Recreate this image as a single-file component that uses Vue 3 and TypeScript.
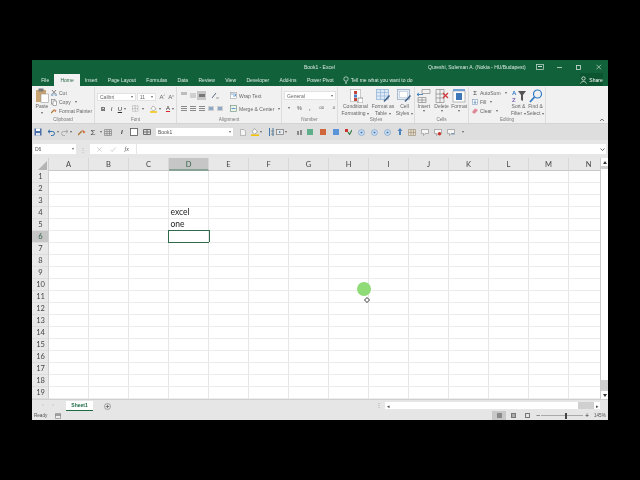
<script setup lang="ts">
const tabs = ['File', 'Home', 'Insert', 'Page Layout', 'Formulas', 'Data', 'Review', 'View', 'Developer', 'Add-ins', 'Power Pivot']
const columns = ['A', 'B', 'C', 'D', 'E', 'F', 'G', 'H', 'I', 'J', 'K', 'L', 'M', 'N']
const rows = Array.from({ length: 19 }, (_, index) => index + 1)

const qatSquares = ['#5fae8c', '#d0673a', '#5b93d8']
const qatRounds = [1, 2, 3]
</script>

<template>
  <div class="page">
    <div class="window">
      <header class="title-bar">
        <span class="doc-title">Book1 - Excel</span>
        <span class="user">Qureshi, Suleman A. (Nokia - HU/Budapest)</span>
        <div class="win-controls">
          <svg width="8" height="6" viewBox="0 0 8 6"><rect x="0.5" y="0.5" width="7" height="5" fill="none" stroke="#cfe0d6" stroke-width=".7" /><rect x="2" y="2" width="4" height="1" fill="#cfe0d6" /></svg>
          <svg width="8" height="6" viewBox="0 0 8 6"><rect x="1" y="3" width="5" height=".8" fill="#cfe0d6" /></svg>
          <svg width="8" height="6" viewBox="0 0 8 6"><rect x="1.500" y="1.500" width="4" height="4" fill="none" stroke="#cfe0d6" stroke-width=".8" /></svg>
          <svg width="8" height="6" viewBox="0 0 8 6"><path d="M1.500 .8l4.500 4.500M6 .8L1.500 5.300" stroke="#cfe0d6" stroke-width=".7" /></svg>
        </div>
      </header>

      <nav class="tab-bar">
        <span v-for="tab in tabs" :key="tab" class="tab" :class="{ 'tab--active': tab === 'Home' }">{{ tab }}</span>
        <span class="tell-me">
          <svg width="6" height="8" viewBox="0 0 6 8"><circle cx="3" cy="3" r="2.200" fill="none" stroke="#dfeee6" stroke-width=".7" /><path d="M2 6.200h2M2.300 7.400h1.400" stroke="#dfeee6" stroke-width=".7" /></svg>
          Tell me what you want to do
        </span>
        <span class="share">
          <svg width="7" height="8" viewBox="0 0 7 8"><circle cx="3.500" cy="2.500" r="1.700" fill="none" stroke="#fff" stroke-width=".7" /><path d="M.6 7.600c.4-2.800 5.400-2.800 5.800 0" fill="none" stroke="#fff" stroke-width=".7" /></svg>
          Share
        </span>
      </nav>

      <section class="ribbon">
        <div class="group group--clipboard">
          <div class="group-body">
            <div class="big-button paste">
              <svg width="14" height="15" viewBox="0 0 14 15"><rect x="1" y="2" width="10" height="12" fill="#c9a471" /><rect x="3.500" y="0.500" width="5" height="3" fill="#7b7b7b" /><rect x="6" y="6" width="7.500" height="8.500" fill="#fff" stroke="#9a9a9a" stroke-width=".6" /></svg>
              <span>Paste</span>
              <i class="caret"></i>
            </div>
            <div class="clip-list">
              <span class="clip-row"><svg width="6" height="6" viewBox="0 0 6 6"><path d="M1 0l3.400 4M5 0L1.600 4" stroke="#555" stroke-width=".7" /><circle cx="1.200" cy="4.800" r=".9" fill="none" stroke="#2f6ea8" stroke-width=".5" /><circle cx="4.800" cy="4.800" r=".9" fill="none" stroke="#2f6ea8" stroke-width=".5" /></svg>Cut</span>
              <span class="clip-row"><svg width="6" height="7" viewBox="0 0 6 7"><rect x=".5" y=".5" width="3.500" height="4.500" fill="#fff" stroke="#777" stroke-width=".6" /><rect x="2" y="2" width="3.500" height="4.500" fill="#fff" stroke="#777" stroke-width=".6" /></svg>Copy<i class="caret caret--side"></i></span>
              <span class="clip-row"><svg width="6" height="6" viewBox="0 0 6 6"><path d="M0 5l3-3" stroke="#a8762e" stroke-width="1.200" /><path d="M3 1l2.600 1.800L4 4.200z" fill="#d0673a" /></svg>Format Painter</span>
            </div>
          </div>
          <div class="group-label">Clipboard</div>
        </div>

        <div class="group group--font">
          <div class="group-body group-body--stack">
            <div class="tool-row">
              <span class="select select--font">Calibri<i class="caret"></i></span>
              <span class="select select--size">11<i class="caret"></i></span>
              <span class="grow-letter">A<sup>^</sup></span>
              <span class="grow-letter">A<sup>v</sup></span>
            </div>
            <div class="tool-row tool-row--format">
              <b class="fmt">B</b><em class="fmt">I</em><u class="fmt">U</u><i class="caret"></i>
              <svg class="borders" width="7" height="7" viewBox="0 0 7 7"><path d="M.5.500h6v6h-6zM3.500.500v6M.5 3.500h6" fill="none" stroke="#8a8a8a" stroke-width=".6" stroke-dasharray="1 .6" /></svg>
              <i class="caret"></i>
              <svg class="fill-icon" width="8" height="8" viewBox="0 0 8 8"><path d="M3.500 .6L6.600 4 3.500 6 1 3.600z" fill="#fff" stroke="#777" stroke-width=".6" /><rect x="0" y="6.400" width="8" height="1.600" fill="#f2c200" /></svg>
              <i class="caret"></i>
              <span class="font-color">A</span>
              <i class="caret"></i>
            </div>
          </div>
          <div class="group-label">Font</div>
        </div>

        <div class="group group--align">
          <div class="group-body group-body--align">
            <div class="align-grid">
              <i class="lines lines--top"></i><i class="lines lines--middle"></i><i class="lines lines--bottom lines--on"></i>
              <svg width="8" height="7" viewBox="0 0 8 7"><path d="M1 6l4-5" stroke="#5f6f8a" stroke-width="1" /><path d="M5 6h3" stroke="#777" stroke-width=".7" /></svg>
              <i class="lines lines--left"></i><i class="lines lines--center"></i><i class="lines lines--right"></i>
              <span class="indents"><i class="indent"></i><i class="indent"></i></span>
            </div>
            <div class="wrap-list">
              <span class="wrap-row"><svg width="7" height="7" viewBox="0 0 7 7"><rect x=".5" y=".5" width="6" height="6" fill="#fff" stroke="#8a8a8a" stroke-width=".5" /><path d="M1 2h4.500v2H3" fill="none" stroke="#3a7fc2" stroke-width=".7" /></svg>Wrap Text</span>
              <span class="wrap-row"><svg width="7" height="7" viewBox="0 0 7 7"><rect x=".5" y=".5" width="6" height="6" fill="#eaf3ec" stroke="#6a8a72" stroke-width=".6" /><path d="M1.500 3.500h4" stroke="#3a7fc2" stroke-width=".8" /></svg>Merge &amp; Center<i class="caret caret--side"></i></span>
            </div>
          </div>
          <div class="group-label">Alignment</div>
        </div>

        <div class="group group--number">
          <div class="group-body group-body--stack">
            <span class="select select--number">General<i class="caret"></i></span>
            <div class="tool-row tool-row--number">
              <svg width="8" height="7" viewBox="0 0 8 7"><rect x="0" y="1" width="6" height="5" fill="#d9e6f5" stroke="#5a86b8" stroke-width=".6" /><circle cx="6" cy="5" r="1.600" fill="#d99a2b" /></svg>
              <i class="caret"></i>
              <span class="sym">%</span>
              <span class="sym sym--comma">,</span>
              <span class="sym sym--small">.00</span>
              <span class="sym sym--small">.0</span>
            </div>
          </div>
          <div class="group-label">Number</div>
        </div>

        <div class="group group--styles">
          <div class="group-body group-body--big">
            <div class="big-button big-button--styles">
              <svg width="14" height="14" viewBox="0 0 14 14"><rect x="1.500" y=".5" width="10" height="12" fill="#fff" stroke="#aaa" stroke-width=".6" /><rect x="5" y="2" width="3" height="3" fill="#c4483a" /><rect x="5" y="5.500" width="3" height="3" fill="#4a7ec4" /><rect x="5" y="9" width="3" height="3" fill="#c4483a" /><rect x="9" y="9" width="5" height="5" fill="#fff" stroke="#666" stroke-width=".6" /></svg>
              <span>Conditional</span><span>Formatting<i class="caret caret--side"></i></span>
            </div>
            <div class="big-button big-button--table">
              <svg width="15" height="14" viewBox="0 0 15 14"><rect x=".5" y=".5" width="12" height="10" fill="#dbe8f6" stroke="#7fa5cf" stroke-width=".6" /><path d="M.5 3.500h12M.5 7h12M4.500.5v10M8.500.5v10" stroke="#7fa5cf" stroke-width=".5" /><path d="M8 12.500l5.500-6" stroke="#3d5f86" stroke-width="1.400" /></svg>
              <span>Format as</span><span>Table<i class="caret caret--side"></i></span>
            </div>
            <div class="big-button big-button--cell">
              <svg width="15" height="14" viewBox="0 0 15 14"><rect x=".5" y=".5" width="12" height="10" fill="#e4ebf3" stroke="#8da6c3" stroke-width=".7" /><rect x="2.500" y="2.500" width="8" height="6" fill="#fff" stroke="#aab9ca" stroke-width=".5" /><path d="M8 12.500l5.500-6" stroke="#3d5f86" stroke-width="1.400" /></svg>
              <span>Cell</span><span>Styles<i class="caret caret--side"></i></span>
            </div>
          </div>
          <div class="group-label">Styles</div>
        </div>

        <div class="group group--cells">
          <div class="group-body group-body--big">
            <div class="big-button big-button--small">
              <svg width="14" height="14" viewBox="0 0 14 14"><path d="M5 .5h8v4H5zM1 8.500h8v5H1zM5 8.500v5M1 11h8" fill="none" stroke="#777" stroke-width=".6" /><path d="M0 5.500h6M0 5.500l2-1.500M0 5.500l2 1.500" stroke="#2f6ea8" stroke-width=".8" /></svg>
              <span>Insert</span><i class="caret"></i>
            </div>
            <div class="big-button big-button--small">
              <svg width="14" height="14" viewBox="0 0 14 14"><path d="M1 .5h8v13H1zM5 .5v13M1 5h8M1 9h8" fill="none" stroke="#777" stroke-width=".6" /><path d="M8 4l5 5M13 4L8 9" stroke="#d13438" stroke-width="1.200" /></svg>
              <span>Delete</span><i class="caret"></i>
            </div>
            <div class="big-button big-button--small">
              <svg width="14" height="14" viewBox="0 0 14 14"><rect x="1" y="2" width="12" height="11" fill="#fff" stroke="#8a8a8a" stroke-width=".6" /><rect x="1" y="0" width="12" height="2" fill="#6fa0d6" /><rect x="4" y="4" width="6" height="7" fill="#3f78b8" /></svg>
              <span>Format</span><i class="caret"></i>
            </div>
          </div>
          <div class="group-label">Cells</div>
        </div>

        <div class="group group--editing">
          <div class="group-body group-body--editing">
            <div class="edit-list">
              <span class="edit-row"><span class="sigma">Σ</span>AutoSum<i class="caret caret--side"></i></span>
              <span class="edit-row"><svg width="6" height="6" viewBox="0 0 6 6"><rect x=".5" y=".5" width="5" height="5" fill="#fff" stroke="#7d9bbd" stroke-width=".6" /><path d="M3 1.300v3M1.800 3.200L3 4.500l1.200-1.300" fill="none" stroke="#2f6ea8" stroke-width=".7" /></svg>Fill<i class="caret caret--side"></i></span>
              <span class="edit-row"><svg width="6" height="6" viewBox="0 0 6 6"><path d="M0 4l3-3.500L6 2 3 5.500H1.500z" fill="#e0889a" /></svg>Clear<i class="caret caret--side"></i></span>
            </div>
            <div class="big-button big-button--sort">
              <svg width="14" height="14" viewBox="0 0 14 14"><text x="0" y="6" class="az az--a">A</text><text x="0" y="13" class="az az--z">Z</text><path d="M6 2h8l-3 4v6l-2-1V6z" fill="#555" /></svg>
              <span>Sort &amp;</span><span>Filter<i class="caret caret--side"></i></span>
            </div>
            <div class="big-button big-button--sort">
              <svg width="14" height="14" viewBox="0 0 14 14"><circle cx="8.500" cy="5" r="4" fill="none" stroke="#2f78c4" stroke-width="1.200" /><path d="M5.500 8L1 13" stroke="#2f78c4" stroke-width="1.800" /></svg>
              <span>Find &amp;</span><span>Select<i class="caret caret--side"></i></span>
            </div>
          </div>
          <div class="group-label">Editing</div>
        </div>

        <svg class="collapse" width="6" height="4" viewBox="0 0 6 4"><path d="M1 3l2-2 2 2" fill="none" stroke="#555" stroke-width=".8" /></svg>
      </section>

      <section class="qat">
        <svg width="8" height="8" viewBox="0 0 8 8"><rect x=".5" y=".5" width="7" height="7" fill="#4a6fa8" /><rect x="2" y=".5" width="4" height="2.500" fill="#fff" /><rect x="2" y="5" width="4" height="2.500" fill="#dfe6f0" /></svg>
        <span class="qat-pair qat-pair--undo"><svg width="9" height="7" viewBox="0 0 9 7"><path d="M1 2.500h4.500a2 2 0 010 4H4M1 2.500L3 .8M1 2.500l2 1.700" fill="none" stroke="#2f6ea8" stroke-width="1" /></svg><i class="caret"></i></span>
        <span class="qat-pair qat-pair--redo"><svg width="9" height="7" viewBox="0 0 9 7"><path d="M8 2.500H3.500a2 2 0 000 4H5M8 2.500L6 .8M8 2.500L6 4.200" fill="none" stroke="#a9a9a9" stroke-width="1" /></svg><i class="caret"></i></span>
        <svg class="qat-brush" width="8" height="8" viewBox="0 0 8 8"><path d="M0 7l4-4" stroke="#a8762e" stroke-width="1.300" /><path d="M4 1.500L7.500 4 5.500 5.500z" fill="#d0673a" /></svg>
        <span class="qat-pair qat-pair--sum"><span class="sigma sigma--big">Σ</span><i class="caret"></i></span>
        <svg class="qat-grid" width="8" height="7" viewBox="0 0 8 7"><path d="M.5.500h7v6h-7zM3 .5v6M5.500.5v6M.5 2.500h7M.5 4.500h7" fill="#ddd" stroke="#777" stroke-width=".6" /></svg>
        <em class="qat-italic">I</em>
        <svg width="8" height="8" viewBox="0 0 8 8"><rect x=".5" y=".5" width="7" height="7" fill="#fff" stroke="#555" stroke-width=".8" /></svg>
        <svg class="qat-merge" width="8" height="6" viewBox="0 0 8 6"><path d="M.5.500h7v5h-7zM4 .5v5M.5 3h7" fill="#ddd" stroke="#555" stroke-width=".8" /></svg>
        <span class="qat-box">Book1<i class="caret"></i></span>
        <svg class="qat-doc" width="6" height="7" viewBox="0 0 6 7"><path d="M.5.500h3.500l1.500 1.500v4.500h-5z" fill="#f4f4f4" stroke="#999" stroke-width=".6" /></svg>
        <span class="qat-pair qat-pair--paint"><svg width="8" height="8" viewBox="0 0 8 8"><path d="M3.500 .6L6.600 4 3.500 6 1 3.600z" fill="#fff" stroke="#777" stroke-width=".6" /><rect x="0" y="6.400" width="8" height="1.600" fill="#f2c200" /></svg><i class="caret"></i></span>
        <svg class="qat-sort" width="7" height="8" viewBox="0 0 7 8"><path d="M1.500 0v8M5 0v8" stroke="#2f6ea8" stroke-width=".9" /><path d="M3 3h3M3 6h3" stroke="#777" stroke-width=".8" /></svg>
        <span class="qat-pair qat-pair--view"><svg width="8" height="7" viewBox="0 0 8 7"><rect x=".5" y=".5" width="7" height="5" fill="#e8e8e8" stroke="#777" stroke-width=".7" /><path d="M3 2l2 1-2 1z" fill="#2f6ea8" /></svg><i class="caret"></i></span>
        <svg class="qat-bars" width="7" height="7" viewBox="0 0 7 7"><path d="M1 6V2h2v4zM4 6V1h2v5z" fill="#888" /></svg>
        <i v-for="color in qatSquares" :key="color" class="qat-square" :style="{ background: color }"></i>
        <svg class="qat-flag" width="7" height="6" viewBox="0 0 7 6"><path d="M0 0h3v3H0z" fill="#c9352c" /><path d="M3 3l1.500 2.500L7 1" fill="none" stroke="#2f7a42" stroke-width="1.100" /></svg>
        <svg v-for="item in qatRounds" :key="item" class="qat-round" width="7" height="7" viewBox="0 0 7 7"><circle cx="3.500" cy="3.500" r="2.900" fill="#d9e7f4" stroke="#6c9ac8" stroke-width=".7" /><circle cx="3.500" cy="3.500" r="1.100" fill="#3f78b8" /></svg>
        <svg class="qat-arrow" width="6" height="8" viewBox="0 0 6 8"><path d="M3 0l2.500 3H4v4H2V3H.5z" fill="#4d86bd" /></svg>
        <svg class="qat-table" width="8" height="7" viewBox="0 0 8 7"><path d="M.5.500h7v6h-7zM3 .5v6M5.500.5v6M.5 3.500h7" fill="#e3d9c6" stroke="#9a8f7a" stroke-width=".6" /></svg>
        <svg class="qat-bubble" width="8" height="7" viewBox="0 0 8 7"><path d="M.5.500h7v4H4L2.500 6.500V4.500h-2z" fill="#f5f5f5" stroke="#888" stroke-width=".6" /></svg>
        <svg class="qat-bubble" width="8" height="7" viewBox="0 0 8 7"><path d="M.5.500h7v4H4L2.500 6.500V4.500h-2z" fill="#f5f5f5" stroke="#888" stroke-width=".6" /><circle cx="5.500" cy="4.800" r="1.700" fill="#c9352c" /></svg>
        <svg class="qat-bubble" width="8" height="7" viewBox="0 0 8 7"><path d="M.5.500h7v4H4L2.500 6.500V4.500h-2z" fill="#f5f5f5" stroke="#888" stroke-width=".6" /><path d="M4.500 5h3" stroke="#3f78b8" stroke-width=".8" /></svg>
        <i class="caret caret--qat"></i>
      </section>

      <section class="formula-band">
        <span class="name-box">D6<i class="caret"></i></span>
        <span class="band-dots">⋮</span>
        <span class="fx-box">
          <svg width="5" height="5" viewBox="0 0 5 5"><path d="M.5.500l4 4M4.500.5l-4 4" stroke="#bdbdbd" stroke-width=".7" /></svg>
          <svg width="6" height="5" viewBox="0 0 6 5"><path d="M.5 2.800l1.700 1.700L5.500.5" fill="none" stroke="#bdbdbd" stroke-width=".7" /></svg>
          <em>fx</em>
        </span>
        <span class="formula-input"><svg width="5" height="3" viewBox="0 0 5 3"><path d="M.5.500l2 2 2-2" fill="none" stroke="#444" stroke-width=".8" /></svg></span>
      </section>

      <main class="sheet">
        <div class="grid">
          <div class="col-heads">
            <span class="corner"><i class="corner-mark"></i></span>
            <span v-for="col in columns" :key="col" class="col-head" :class="{ 'col-head--on': col === 'D' }">{{ col }}</span>
          </div>
          <div v-for="row in rows" :key="row" class="row">
            <span class="row-head" :class="{ 'row-head--on': row === 6 }">{{ row }}</span>
            <span
              v-for="col in columns"
              :key="col"
              class="cell"
              :class="{ 'cell--selected': col === 'D' && row === 6 }"
            >
              <template v-if="col === 'D' && row === 4">excel</template>
              <template v-else-if="col === 'D' && row === 5">one</template>
            </span>
          </div>
        </div>
        <div class="v-scroll">
          <span class="scroll-btn"><svg width="4" height="3" viewBox="0 0 4 3"><path d="M2 0l2 3H0z" fill="#333" /></svg></span>
          <span class="v-thumb"></span>
          <span class="scroll-btn"><svg width="4" height="3" viewBox="0 0 4 3"><path d="M2 3L0 0h4z" fill="#333" /></svg></span>
        </div>
        <span class="pointer-halo"></span>
        <svg class="pointer" width="6" height="6" viewBox="0 0 6 6"><path d="M3 .5L5.500 3 3 5.500.5 3z" fill="#fff" stroke="#222" stroke-width=".9" /></svg>
      </main>

      <section class="sheet-tabs">
        <span class="tab-nav">‹</span>
        <span class="tab-nav">›</span>
        <span class="sheet-tab">Sheet1</span>
        <svg class="add-sheet" width="7" height="7" viewBox="0 0 7 7"><circle cx="3.500" cy="3.500" r="3" fill="none" stroke="#777" stroke-width=".6" /><path d="M3.500 1.800v3.400M1.800 3.500h3.400" stroke="#555" stroke-width=".7" /></svg>
        <span class="h-dots">⋮</span>
        <div class="h-scroll">
          <span class="h-arrow">◂</span>
          <span class="h-thumb"></span>
          <span class="h-rest"></span>
          <span class="h-arrow">▸</span>
        </div>
      </section>

      <footer class="status-bar">
        <span>Ready</span>
        <svg class="macro" width="6" height="6" viewBox="0 0 6 6"><path d="M.5.500h5v5h-5z" fill="#eee" stroke="#777" stroke-width=".6" /><path d="M.5 2h5" stroke="#555" stroke-width="1" /></svg>
        <div class="status-right">
          <span class="view-btn view-btn--on"><i class="view-grid"></i></span>
          <span class="view-btn"><i class="view-page"></i></span>
          <span class="view-btn"><i class="view-break"></i></span>
          <span class="zoom-sign">−</span>
          <span class="zoom-track"><i class="zoom-thumb"></i></span>
          <span class="zoom-sign">+</span>
          <span class="zoom-value">145%</span>
        </div>
      </footer>
    </div>
  </div>
</template>

<style>
html,
body {
  margin: 0;
  background: #000;
}
</style>

<style scoped>
.page {
  width: 640px;
  height: 480px;
  padding: 60px 32px;
  box-sizing: border-box;
  background: #000;
  font-family: 'Liberation Sans', Arial, sans-serif;
  overflow: hidden;
}

.window {
  width: 576px;
  height: 360px;
  display: flex;
  flex-direction: column;
  background: #f1f1f1;
  color: #444;
  font-size: 5px;
  filter: blur(0.3px);
}

.caret {
  display: inline-block;
  flex: none;
  width: 0;
  height: 0;
  border-left: 1.500px solid transparent;
  border-right: 1.500px solid transparent;
  border-top: 2px solid #666;
}

.caret--side {
  margin-left: 2px;
  vertical-align: middle;
}

.title-bar {
  height: 13px;
  flex: none;
  display: flex;
  align-items: center;
  background: #11613a;
  color: #dcebe3;
  font-size: 5px;
}

.doc-title {
  margin-left: 272px;
  width: 36px;
  white-space: nowrap;
}

.user {
  margin-left: 88px;
  white-space: nowrap;
  width: 106px;
}

.win-controls {
  display: flex;
  align-items: center;
  margin-left: 2px;
  gap: 11.500px;
}

.tab-bar {
  height: 13px;
  flex: none;
  display: flex;
  align-items: flex-end;
  padding-left: 4px;
  background: #11613a;
  color: #dcebe3;
  font-size: 5px;
}

.tab {
  height: 12px;
  line-height: 12px;
  padding: 0 5.200px;
  white-space: nowrap;
}

.tab--active {
  background: #f1f1f1;
  color: #2a6a48;
  padding: 0 6px;
}

.tell-me {
  display: flex;
  align-items: center;
  gap: 2px;
  height: 12px;
  margin-left: 4px;
  white-space: nowrap;
}

.share {
  display: flex;
  align-items: center;
  justify-content: center;
  gap: 2px;
  width: 23px;
  height: 13px;
  margin-left: auto;
  margin-right: 5px;
  background: #0c5531;
  color: #fff;
}

.ribbon {
  position: relative;
  height: 38px;
  flex: none;
  display: flex;
  background: #f1f1f1;
  color: #666;
  font-size: 5px;
  box-sizing: border-box;
  border-bottom: 1px solid #d4d4d4;
}

.group {
  display: flex;
  flex-direction: column;
  flex: none;
  box-sizing: border-box;
  border-right: 1px solid #dcdcdc;
  margin-top: 1px;
}

.group--clipboard { width: 63px; }
.group--font { width: 82px; }
.group--align { width: 105px; }
.group--number { width: 56px; }
.group--styles { width: 77px; }
.group--cells { width: 54px; }
.group--editing { width: 77px; }

.group-body {
  flex: 1;
  display: flex;
  min-height: 0;
}

.group-body--stack {
  flex-direction: column;
  padding: 5px 2px 0;
  gap: 3px;
}

.group-label {
  height: 6px;
  line-height: 5px;
  text-align: center;
  color: #777;
  font-size: 4.600px;
}

.big-button {
  display: flex;
  flex-direction: column;
  align-items: center;
  line-height: 7px;
  white-space: nowrap;
  padding-top: 2px;
}

.big-button svg {
  flex: none;
}

.big-button span {
  flex: none;
}

.paste {
  width: 18px;
  margin-left: 1px;
  padding-top: 1px;
}

.paste .caret {
  margin-top: 2px;
}

.clip-list {
  display: flex;
  flex-direction: column;
  gap: 3px;
  padding-top: 3px;
}

.clip-row {
  display: flex;
  align-items: center;
  gap: 2px;
  height: 6px;
  white-space: nowrap;
}

.clip-row svg {
  flex: none;
}

.select {
  display: flex;
  align-items: center;
  justify-content: space-between;
  box-sizing: border-box;
  height: 8px;
  padding: 0 2px;
  background: #fff;
  border: 1px solid #e2e2e2;
  color: #666;
}

.tool-row {
  display: flex;
  align-items: center;
  height: 9px;
}

.select--font { width: 40px; }
.select--size { width: 20px; margin-left: 1px; }

.grow-letter {
  margin-left: 3px;
  width: 6px;
  font-size: 6px;
}

.grow-letter sup {
  font-size: 3px;
  vertical-align: top;
}

.tool-row--format {
  padding-left: 2px;
}

.fmt {
  width: 9px;
  font-size: 6px;
  color: #333;
  text-align: center;
}

.borders {
  margin-left: 6px;
  margin-right: 3px;
}

.fill-icon {
  margin-left: 6px;
  margin-right: 2px;
}

.font-color {
  margin-left: 5px;
  margin-right: 2px;
  color: #333;
  font-size: 6px;
  line-height: 6px;
  border-bottom: 1.500px solid #d8222a;
}

.group-body--align {
  padding: 4px 0 0 2px;
}

.align-grid {
  display: grid;
  grid-template-columns: repeat(3, 9px) 18px;
  grid-auto-rows: 9px;
  row-gap: 4px;
  align-items: center;
  justify-items: center;
  height: 22px;
}

.lines {
  display: block;
  width: 6px;
  height: 5px;
  background: repeating-linear-gradient(#8a8a8a 0 1px, transparent 1px 2px);
}

.lines--on {
  width: 9px;
  height: 9px;
  background: #c6c6c6 linear-gradient(#777, #777) center / 6px 3px no-repeat;
}

.lines--middle {
  background: #cfcfcf;
}

.lines--top {
  background: #bdbdbd;
  height: 3px;
  align-self: start;
  margin-top: 1px;
}

.indents {
  display: flex;
  gap: 3px;
}

.indent {
  display: block;
  width: 6px;
  height: 5px;
  background: #8ba8c8;
  border: 1px solid #cfcfcf;
  box-sizing: border-box;
}

.wrap-list {
  display: flex;
  flex-direction: column;
  gap: 4px;
  margin-left: 6px;
}

.wrap-row {
  display: flex;
  align-items: center;
  gap: 2px;
  height: 9px;
  white-space: nowrap;
}

.select--number {
  flex: none;
  width: 52px;
  height: 9px;
  margin-top: -1px;
}

.tool-row--number {
  padding-left: 3px;
  gap: 1px;
}

.sym {
  font-size: 5.500px;
  margin-left: 6px;
  color: #555;
}

.sym--comma {
  font-weight: 700;
  margin-left: 6px;
}

.sym--small {
  font-size: 4px;
  margin-left: 7px;
}

.group-body--big {
  justify-content: flex-start;
}

.big-button--styles { width: 31px; margin-left: 2px; }
.big-button--table { width: 24px; }
.big-button--cell { width: 19px; }
.big-button--small { width: 18px; }

.group-body--editing {
  padding-left: 3px;
}

.edit-list {
  display: flex;
  flex-direction: column;
  gap: 3px;
  padding-top: 3px;
  width: 38px;
}

.edit-row {
  display: flex;
  align-items: center;
  gap: 2px;
  height: 6px;
  white-space: nowrap;
}

.sigma {
  font-size: 6px;
  color: #444;
  width: 6px;
  text-align: center;
}

.sigma--big {
  font-size: 8px;
  margin-right: 3px;
}

.big-button--sort {
  width: 17px;
}

.az {
  font-size: 6px;
  font-weight: 700;
  font-family: 'Liberation Sans', Arial, sans-serif;
}

.az--a { fill: #2f78c4; }
.az--z { fill: #7c5fb0; }

.collapse {
  position: absolute;
  right: 3px;
  bottom: 1px;
}

.qat {
  height: 16px;
  flex: none;
  display: flex;
  align-items: center;
  padding-left: 2px;
  box-sizing: border-box;
  background: #dedede;
}

.qat-pair {
  display: flex;
  align-items: center;
  gap: 1px;
}

.qat-pair--undo { margin-left: 5px; }
.qat-pair--redo { margin-left: 1px; }
.qat-brush { margin-left: 6px; }
.qat-pair--sum { margin-left: 4px; }
.qat-grid { margin-left: 2px; }

.qat-italic {
  margin-left: 9px;
  width: 9px;
  color: #333;
  font-size: 6px;
  font-weight: 700;
}

.qat-merge { margin-left: 5px; }

.qat-box {
  display: flex;
  align-items: center;
  justify-content: space-between;
  box-sizing: border-box;
  width: 77px;
  height: 8px;
  margin-left: 5px;
  padding: 0 2px;
  background: #fff;
  color: #555;
  font-size: 5px;
}

.qat-doc { margin-left: 7px; }
.qat-pair--paint { margin-left: 5px; }
.qat-sort { margin-left: 6px; }
.qat-pair--view { margin-left: 1px; }
.qat-bars { margin-left: 9px; }

.qat-square {
  display: block;
  width: 6px;
  height: 6px;
  margin-left: 7px;
}

.qat-bars + .qat-square { margin-left: 4px; }
.qat-flag { margin-left: 6px; }
.qat-round { margin-left: 6px; }
.qat-arrow { margin-left: 6px; }
.qat-table { margin-left: 5px; }
.qat-bubble { margin-left: 5px; }
.caret--qat { margin-left: 7px; }

.formula-band {
  height: 18px;
  flex: none;
  display: flex;
  align-items: center;
  box-sizing: border-box;
  padding: 2px 2px 2px 1px;
  background: #e6e6e6;
}

.name-box {
  display: flex;
  align-items: center;
  justify-content: space-between;
  box-sizing: border-box;
  width: 43px;
  height: 10px;
  padding: 0 2px;
  background: #fff;
  color: #555;
  font-size: 5px;
}

.band-dots {
  width: 14px;
  text-align: center;
  color: #aaa;
  font-size: 6px;
}

.fx-box {
  display: flex;
  align-items: center;
  justify-content: space-around;
  box-sizing: border-box;
  width: 46px;
  height: 10px;
  padding: 0 3px;
  background: #fff;
  color: #555;
  font-family: 'Liberation Serif', serif;
  font-size: 6px;
}

.formula-input {
  flex: 1;
  display: flex;
  align-items: center;
  justify-content: flex-end;
  height: 10px;
  margin-left: 1px;
  padding-right: 1px;
  background: #fff;
}

.sheet {
  position: relative;
  height: 241px;
  flex: none;
  display: flex;
  background: #fff;
}

.grid {
  width: 568px;
  overflow: hidden;
  flex: none;
}

.col-heads {
  display: flex;
  height: 13px;
  background: #e8e8e8;
  color: #444;
  font-family: Lato, 'Liberation Sans', sans-serif;
  font-size: 7.500px;
}

.corner {
  position: relative;
  flex: none;
  width: 17px;
  box-sizing: border-box;
  border-right: 1px solid #d0d0d0;
}

.corner-mark {
  position: absolute;
  right: 1px;
  bottom: 1px;
  border-left: 9px solid transparent;
  border-bottom: 9px solid #b4b4b4;
}

.col-head {
  flex: none;
  width: 40px;
  box-sizing: border-box;
  line-height: 13px;
  text-align: center;
  border-right: 1px solid #d8d8d8;
  border-bottom: 1px solid #c8c8c8;
}

.col-head--on {
  background: #c6c6c6;
  color: #2e5f45;
  border-bottom: 2px solid #88a294;
}

.row {
  display: flex;
  height: 12px;
}

.row-head {
  flex: none;
  width: 17px;
  box-sizing: border-box;
  padding-left: 1px;
  line-height: 12px;
  text-align: center;
  background: #e8e8e8;
  color: #444;
  font-family: Lato, 'Liberation Sans', sans-serif;
  font-size: 7.500px;
  border-right: 1px solid #cfcfcf;
  border-bottom: 1px solid #dcdcdc;
}

.row-head--on {
  background: #c6c6c6;
  color: #2e5f45;
}

.cell {
  position: relative;
  flex: none;
  width: 40px;
  box-sizing: border-box;
  padding-left: 1.500px;
  line-height: 11px;
  color: #222;
  font-family: Lato, 'Liberation Sans', sans-serif;
  font-size: 8.500px;
  border-right: 1px solid #e6e6e6;
  border-bottom: 1px solid #ececec;
}

.cell--selected::after {
  content: '';
  position: absolute;
  left: -1px;
  top: -1px;
  width: 40px;
  height: 11px;
  border: 1px solid #2f6b4b;
}

.v-scroll {
  flex: none;
  width: 8px;
  display: flex;
  flex-direction: column;
  box-sizing: border-box;
  border-left: 1px solid #cccccc;
  background: #cfcfcf;
}

.scroll-btn {
  height: 8px;
  flex: none;
  display: flex;
  align-items: center;
  justify-content: center;
  background: #fff;
}

.v-thumb {
  flex: 1;
  background: #fff;
  margin: 3px 0 11px;
}

.pointer-halo {
  position: absolute;
  left: 325px;
  top: 124px;
  width: 14px;
  height: 14px;
  border-radius: 50%;
  background: #8edb78;
}

.pointer {
  position: absolute;
  left: 332px;
  top: 139px;
}

.sheet-tabs {
  height: 12px;
  flex: none;
  display: flex;
  align-items: flex-start;
  box-sizing: border-box;
  padding-left: 6px;
  background: #e6e6e6;
  border-top: 1px solid #cfcfcf;
}

.tab-nav {
  width: 10px;
  height: 9px;
  line-height: 8px;
  text-align: center;
  color: #bbb;
  font-size: 6px;
}

.sheet-tab {
  width: 27px;
  height: 9px;
  margin: 1px 0 0 8px;
  line-height: 9px;
  text-align: center;
  background: #fff;
  color: #1e6b43;
  font-size: 5px;
  font-weight: 700;
  border-bottom: 1px solid #1e6b43;
}

.add-sheet {
  margin: 3px 0 0 11px;
}

.h-dots {
  margin-left: 265px;
  color: #999;
  font-size: 6px;
  line-height: 10px;
}

.h-scroll {
  flex: 1;
  display: flex;
  align-items: center;
  height: 7px;
  margin: 2px 8px 0 3px;
  background: #fff;
  color: #444;
  font-size: 5px;
}

.h-arrow {
  width: 6px;
  text-align: center;
}

.h-thumb {
  flex: 1;
  height: 7px;
  background: #fff;
}

.h-rest {
  width: 16px;
  height: 7px;
  background: #d0d0d0;
}

.status-bar {
  height: 9px;
  flex: none;
  display: flex;
  align-items: center;
  padding-left: 2px;
  background: #e6e6e6;
  color: #555;
  font-size: 4.600px;
}

.macro {
  margin-left: 8px;
}

.status-right {
  display: flex;
  align-items: center;
  height: 9px;
  margin-left: auto;
  margin-right: 1px;
}

.view-btn {
  display: flex;
  align-items: center;
  justify-content: center;
  width: 14px;
  height: 9px;
}

.view-btn--on {
  background: #c8c8c8;
}

.view-grid,
.view-page,
.view-break {
  display: block;
  width: 5px;
  height: 5px;
  box-sizing: border-box;
  background: #8a8a8a;
}

.view-page {
  background: #aaa;
  border: 1px solid #777;
}

.view-break {
  background: transparent;
  border: 1px solid #777;
}

.zoom-sign {
  width: 6px;
  margin-left: 1px;
  text-align: center;
  color: #333;
  font-size: 7px;
  line-height: 9px;
}

.zoom-track {
  position: relative;
  width: 42px;
  height: 1px;
  background: #aaa;
}

.zoom-thumb {
  position: absolute;
  left: 24px;
  top: -2.500px;
  width: 1.500px;
  height: 6px;
  background: #444;
}

.zoom-value {
  width: 13px;
  margin-left: 4px;
  white-space: nowrap;
}
</style>
